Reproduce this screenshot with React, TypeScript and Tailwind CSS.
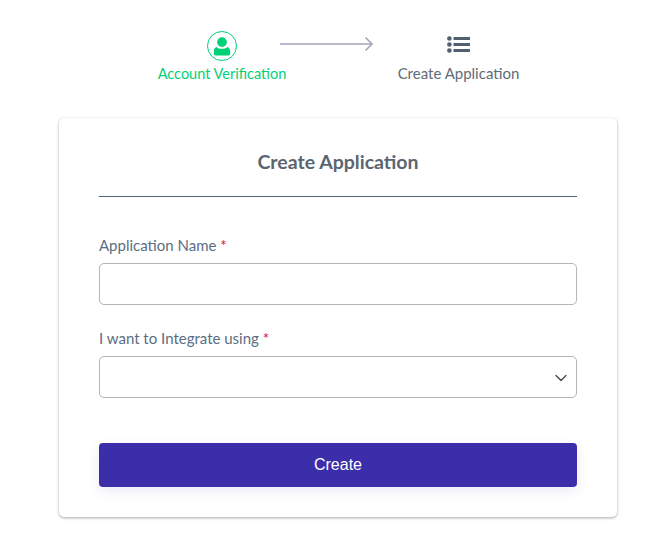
import { ChevronDown } from "lucide-react"

function UserBadge() {
  return (
    <div className="flex h-[30px] w-[30px] items-center justify-center rounded-full border border-[#00d177]">
      <svg viewBox="0 0 20 22" className="h-[19px] w-[18px]" fill="#00d177">
        <circle cx="10" cy="6" r="5.6" />
        <path d="M3.5 11.5C1.5 12.3 0.6 14 0.6 16v3.5c0 1.2 .8 2 2 2h14.8c1.2 0 2-.8 2-2V16c0-2-.9-3.7-2.9-4.5-1.6 1.4-4 2.2-6.5 2.2s-4.9-.8-6.5-2.2z" />
      </svg>
    </div>
  )
}

function ListIcon() {
  return (
    <svg viewBox="0 0 23 17" className="h-[17px] w-[23px]" fill="#515f6f">
      <circle cx="2.4" cy="2.5" r="2.3" />
      <circle cx="2.4" cy="8.5" r="2.3" />
      <circle cx="2.4" cy="14.5" r="2.3" />
      <rect x="6.5" y="1" width="16.5" height="3" />
      <rect x="6.5" y="7" width="16.5" height="3" />
      <rect x="6.5" y="13" width="16.5" height="3" />
    </svg>
  )
}

function Arrow() {
  return (
    <svg viewBox="0 0 94 16" className="mt-[5px] -ml-[7px] h-4 w-[94px]" fill="none" stroke="#a3a3b8">
      <path d="M0 8h91" strokeWidth="1.3" />
      <path d="M85.5 1.5l6.5 6.5-6.5 6.5" strokeWidth="1.6" />
    </svg>
  )
}

function Label({ text }: { text: string }) {
  return (
    <label className="block text-[15px] leading-5 text-[#5a6e82]">
      {text} <span className="text-[#e6003a]">*</span>
    </label>
  )
}

export default function App() {
  return (
    <div className="min-h-[535px] bg-white pt-[31px] font-['Lato',sans-serif]">
      <div className="flex pl-[157px]">
        <div className="flex w-[130px] flex-col items-center gap-[3px]">
          <UserBadge />
          <span className="text-[14.5px] leading-5 whitespace-nowrap text-[#00d177]">Account Verification</span>
        </div>
        <Arrow />
        <div className="ml-[22px] flex w-[125px] flex-col items-center gap-[5px]">
          <div className="flex h-[27px] items-center">
            <ListIcon />
          </div>
          <span className="text-[15px] leading-5 whitespace-nowrap text-[#5f6b78]">Create Application</span>
        </div>
      </div>

      <div className="mt-[34px] ml-[59px] h-[399px] w-[558px] rounded-[5px] bg-white px-10 pt-[30px] shadow-[0_1px_3px_rgba(0,0,0,0.35)]">
        <h1 className="text-center text-[19.5px] leading-7 font-bold text-[#5a6672]">Create Application</h1>
        <div className="mt-[20px] h-px bg-[#52667a]" />
        <div className="mt-[38px]">
          <Label text="Application Name" />
          <input className="mt-[8px] block h-[42px] w-full rounded-[5px] border border-[#b5b5b5] bg-white" />
        </div>
        <div className="mt-[23px]">
          <Label text="I want to Integrate using" />
          <div className="relative mt-[8px]">
            <div className="h-[42px] w-full rounded-[5px] border border-[#b5b5b5] bg-white" />
            <ChevronDown className="absolute top-[12px] right-[6px] h-5 w-5 text-[#444444]" strokeWidth={1.5} />
          </div>
        </div>
        <button className="mt-[45px] block h-11 w-full rounded-[4px] bg-[#3c2dab] font-['Liberation_Sans',sans-serif] text-base text-white shadow-[0_4px_12px_rgba(60,45,171,0.1)]">
          Create
        </button>
      </div>
    </div>
  )
}
